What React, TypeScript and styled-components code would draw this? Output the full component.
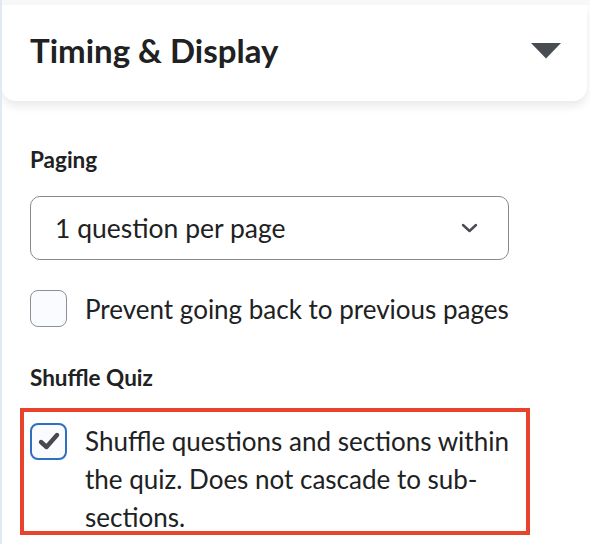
import React from "react";
import styled, { createGlobalStyle } from "styled-components";

const Global = createGlobalStyle`
  html, body { margin: 0; padding: 0; background: #ffffff; }
  body { font-family: Lato, "Noto Sans", sans-serif; color: #202122; }
  * { box-sizing: border-box; }
`;

const Page = styled.div`
  width: 590px;
  height: 544px;
  overflow: hidden;
  border-left: 2px solid #e3e9f1;
  padding-top: 5px;
  background: linear-gradient(#f7f8f9 0, #f7f8f9 5px, #ffffff 5px);
`;

const HeaderCard = styled.div`
  height: 96px;
  margin-right: 3px;
  background: #ffffff;
  border-radius: 0 0 14px 14px;
  box-shadow: 0 5px 10px rgba(0, 0, 0, 0.09);
  display: flex;
  align-items: center;
  justify-content: space-between;
  padding: 0 26px 6px 28px;
`;

const Title = styled.h2`
  margin: 0;
  font-size: 33px;
  font-weight: 700;
  color: #202122;
`;

const Arrow = styled.svg`
  margin-top: 2px;
`;

const Content = styled.div`
  padding: 46px 0 0 28px;
  display: flex;
  flex-direction: column;
`;

const Label = styled.div<{ $top?: number }>`
  margin-top: ${(p) => p.$top ?? 0}px;
  font-size: 22.5px;
  font-weight: 700;
  line-height: 26px;
  color: #202122;
`;

const SelectBox = styled.div`
  margin-top: 23px;
  width: 479px;
  height: 64px;
  flex: 0 0 auto;
  border: 1px solid #868a8f;
  border-radius: 10px;
  display: flex;
  align-items: center;
  justify-content: space-between;
  padding: 0 30px 0 24px;
  font-size: 26.5px;
  color: #202122;
`;

const CheckRow = styled.div<{ $top: number }>`
  margin-top: ${(p) => p.$top}px;
  display: flex;
  align-items: flex-start;
  gap: 18px;
`;

const Box = styled.div<{ $checked?: boolean }>`
  flex: 0 0 auto;
  width: 37px;
  height: 37px;
  border-radius: 8px;
  background: #f9fbff;
  border: ${(p) => (p.$checked ? "2px solid #2f6fc2" : "1px solid #8c9096")};
  display: flex;
  align-items: center;
  justify-content: center;
`;

const CheckText = styled.div`
  font-size: 26px;
  line-height: 38px;
  color: #202122;
  width: 432px;
  margin-top: -0.5px;
  white-space: nowrap;
`;

const WrapText = styled(CheckText)`
  white-space: normal;
`;

const Highlight = styled.div`
  margin-top: 17px;
  margin-left: -10px;
  width: 510px;
  height: 127px;
  border: 4px solid #e8432b;
  padding: 11px 0 0 6px;
`;

export default function App() {
  return (
    <>
      <Global />
      <Page>
        <HeaderCard>
          <Title>Timing &amp; Display</Title>
          <Arrow width="30" height="16" viewBox="0 0 30 16">
            <path d="M0 0 H30 L15 15.5 Z" fill="#494c50" />
          </Arrow>
        </HeaderCard>
        <Content>
          <Label>Paging</Label>
          <SelectBox>
            <span>1 question per page</span>
            <svg width="17" height="10" viewBox="0 0 17 10">
              <path d="M2 2 L8.5 8 L15 2" fill="none" stroke="#494c50" strokeWidth="2.4" strokeLinecap="round" strokeLinejoin="round" />
            </svg>
          </SelectBox>
          <CheckRow $top={30}>
            <Box />
            <CheckText>Prevent going back to previous pages</CheckText>
          </CheckRow>
          <Label $top={37}>Shuffle Quiz</Label>
          <Highlight>
            <CheckRow $top={0}>
              <Box $checked>
                <svg width="24" height="20" viewBox="0 0 24 20">
                  <path d="M4 11 L9.5 16 L20 4" fill="none" stroke="#46494d" strokeWidth="4.4" strokeLinecap="round" strokeLinejoin="round" />
                </svg>
              </Box>
              <WrapText>
                Shuffle questions and sections within the quiz. Does not cascade to sub-sections.
              </WrapText>
            </CheckRow>
          </Highlight>
        </Content>
      </Page>
    </>
  );
}
